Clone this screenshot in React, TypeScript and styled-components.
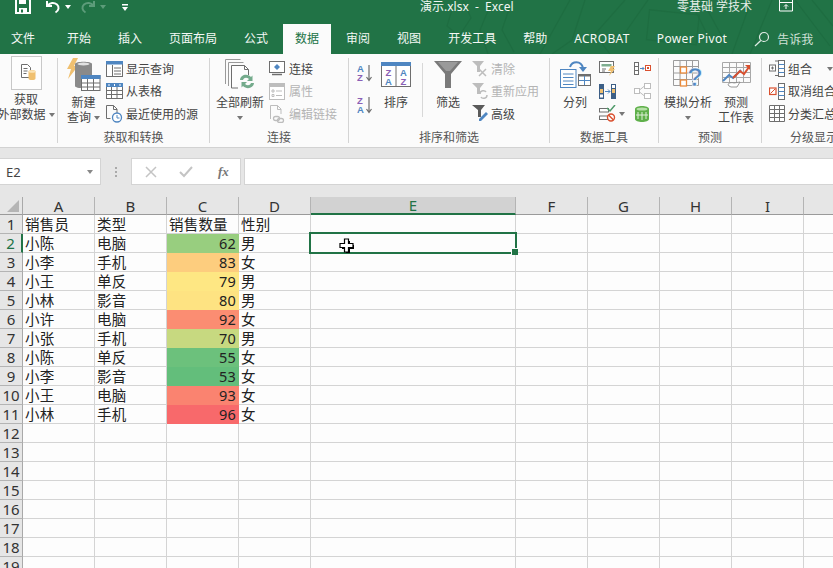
import React from "react";
import styled, { createGlobalStyle } from "styled-components";

const GREEN = "#217346";
const BLUE = "#4f86c1";
const GRAY = "#6e6e6e";
const DIM = "#bdbdbd";
const ORANGE = "#e98a3c";
const AMBER = "#f0c070";
const RED = "#d9502f";
const PURPLE = "#8a5fb5";

const GlobalStyle = createGlobalStyle`
  html, body {
    margin: 0;
    padding: 0;
    background: #fdfdfd;
  }
  * {
    box-sizing: border-box;
  }
`;

/* ---------- drawings ---------- */

const SaveIcon = () => (
  <svg width="16" height="14" viewBox="0 0 16 14">
    <path d="M1 -3h11l3 3v13H1z" fill="none" stroke="#fff" strokeWidth="2" />
    <path d="M4 0h7v4H4zM4 8h8v5H4z" fill="#fff" />
    <rect x="6" y="9.5" width="2" height="3" fill={GREEN} />
  </svg>
);

const UndoIcon = ({ color }: { color: string }) => (
  <svg width="16" height="14" viewBox="0 0 16 14">
    <path d="M2 1v5h5" fill="none" stroke={color} strokeWidth="2" />
    <path d="M2.5 5.5C5 2.5 9 2 12 4.5c2.5 2.300 2 6 -1.500 8" fill="none" stroke={color} strokeWidth="2" />
  </svg>
);

const RedoIcon = ({ color }: { color: string }) => (
  <svg width="16" height="14" viewBox="0 0 16 14">
    <path d="M14 1v5H9" fill="none" stroke={color} strokeWidth="2" />
    <path d="M13.500 5.500C11 2.500 7 2 4 4.500c-2.500 2.300 -2 6 1.500 8" fill="none" stroke={color} strokeWidth="2" />
  </svg>
);

const CustomizeIcon = () => (
  <svg width="8" height="7" viewBox="0 0 8 7">
    <rect x="1" y="0" width="6" height="1.500" fill="#fff" />
    <path d="M1 3h6L4 7z" fill="#fff" />
  </svg>
);

const DisplayIcon = () => (
  <svg width="14" height="12" viewBox="0 0 14 12">
    <path d="M.5 -1h13v12H.5z" fill="none" stroke="#fff" />
    <path d="M.5 2.500h13" stroke="#fff" />
    <path d="M7 9V5M5 6.500 7 4.500 9 6.500" fill="none" stroke="#fff" />
  </svg>
);

const SearchIcon = () => (
  <svg width="16" height="16" viewBox="0 0 16 16">
    <circle cx="10" cy="6" r="4.500" fill="none" stroke="#e2ece6" strokeWidth="1.200" />
    <path d="M6.800 9.500 1 15" stroke="#e2ece6" strokeWidth="1.200" />
  </svg>
);

const Doodle = () => (
  <svg width="413" height="54" viewBox="0 0 413 54">
    <g fill="none" stroke="#1e6d41" strokeWidth="1.200">
      <path d="M35 0 l-8 26 12 10 12 -18 -8 -18" />
      <path d="M120 54 L150 0 M165 0 L152 40 L132 54" />
      <path d="M205 0 L175 34 L190 54 M228 0 L200 40" />
      <path d="M270 0 L290 40 M282 0 L306 44" />
      <path d="M330 4 L312 54 M352 0 L330 54" />
      <path d="M375 0 L410 46 M392 0 L413 26" />
      <path d="M68 54 L60 30 L70 6" />
      <rect x="228" y="12" width="50" height="30" transform="rotate(6 250 26)" />
      <path d="M92 0 L82 30 L94 52" />
    </g>
  </svg>
);

const ExternalDataIcon = () => (
  <svg width="31" height="34" viewBox="0 0 31 34">
    <rect x=".5" y=".5" width="30" height="33" fill="#fdfdfd" stroke="#c8c8c8" />
    <path d="M10.500 8.500h6l3 3v10h-9z" fill="#fff" stroke={GRAY} />
    <path d="M12.500 12.500h4M12.500 15h4M12.500 17.500h3" stroke={GRAY} />
    <path d="M17.500 15.500c0 -2 7 -2 7 0v7c0 2 -7 2 -7 0z" fill={AMBER} />
    <ellipse cx="21" cy="15.500" rx="3.500" ry="1.300" fill="#fbe3b5" />
  </svg>
);

const NewQueryIcon = () => (
  <svg width="34" height="33" viewBox="0 0 34 33">
    <path d="M6 0h5L7 8h4L1 21l3 -10H0z" fill={AMBER} />
    <path d="M8 6c0 -3 17 -3 17 0v22c0 3 -17 3 -17 0z" fill="#8a8a8a" />
    <ellipse cx="16.500" cy="6" rx="6" ry="1.500" fill="#e2e2e2" />
    <rect x="14.500" y="17.500" width="18.500" height="15" fill="#fff" stroke={GRAY} />
    <rect x="14" y="17" width="19.500" height="4" fill={BLUE} />
    <path d="M20.500 21v11M26.500 21v11M15 25h18M15 29h18" stroke={GRAY} />
  </svg>
);

const ShowQueryIcon = () => (
  <svg width="17" height="16" viewBox="0 0 17 16">
    <rect x=".5" y=".5" width="16" height="15" fill="#fff" stroke={GRAY} />
    <rect x="0" y="0" width="17" height="3.500" fill={BLUE} />
    <path d="M6.500 4v11M8 7h7M8 10h7M8 13h7" stroke={GRAY} />
  </svg>
);

const FromTableIcon = () => (
  <svg width="17" height="16" viewBox="0 0 17 16">
    <rect x=".5" y=".5" width="16" height="15" fill="#fff" stroke={GRAY} />
    <rect x="0" y="0" width="17" height="4" fill={BLUE} />
    <path d="M3 1v2M8.500 1v2M14 1v2" stroke="#fff" />
    <path d="M5.500 4v11M11 4v11M1 7.500h15M1 11.500h15" stroke={GRAY} />
  </svg>
);

const RecentIcon = () => (
  <svg width="17" height="18" viewBox="0 0 17 18">
    <path d="M.5 .5h7l3.500 3.500v5M.5 .5v13h4" fill="none" stroke={GRAY} />
    <path d="M7.500 .5v4H11" fill="none" stroke={GRAY} />
    <circle cx="11" cy="12.500" r="4.500" fill="#fff" stroke={BLUE} strokeWidth="1.300" />
    <path d="M11 10v3h2.500" fill="none" stroke={BLUE} />
  </svg>
);

const RefreshAllIcon = () => (
  <svg width="30" height="32" viewBox="0 0 30 32">
    <path d="M.5 25V.5h15" fill="none" stroke="#9a9a9a" />
    <path d="M3.500 27V3.500h15" fill="none" stroke="#9a9a9a" />
    <path d="M6.500 29V6.500h13l4 4V16M6.500 29H13" fill="#fdfdfd" stroke={GRAY} />
    <path d="M19.500 6.500v4h4" fill="none" stroke={GRAY} />
    <path d="M15 21c.5 -5 7 -7 11 -3l1.500 -1.500V22h-5.500l2 -2c-2.500 -2 -5 -1.500 -6 1z" fill="#74ab8c" />
    <path d="M29 24c-.5 5 -7 7 -11 3l-1.500 1.500V23H22l-2 2c2.500 2 5 1.500 6 -1z" fill="#74ab8c" />
  </svg>
);

const ConnectionsIcon = () => (
  <svg width="16" height="15" viewBox="0 0 16 15">
    <rect x=".5" y=".5" width="15" height="11" fill="#fff" stroke={GRAY} />
    <path d="M8 3l3 3 -3 3 -3 -3z" fill={BLUE} />
    <path d="M3 13.500h10" stroke={GRAY} strokeWidth="1.500" />
  </svg>
);

const PropertiesIcon = () => (
  <svg width="16" height="17" viewBox="0 0 16 17">
    <rect x=".5" y=".5" width="15" height="16" fill="#fff" stroke={DIM} />
    <rect x="1" y="1" width="14" height="3" fill={DIM} />
    <path d="M3 7h2v2H3zM3 11.500h2v2H3zM7 8h6M7 12.500h6" fill="none" stroke={DIM} />
  </svg>
);

const EditLinksIcon = () => (
  <svg width="17" height="18" viewBox="0 0 17 18">
    <path d="M1.500 14V.5h7l3.500 3.500v5" fill="none" stroke={DIM} />
    <path d="M8.500 .5v4H12" fill="none" stroke={DIM} />
    <rect x="4.500" y="11.500" width="6" height="4" rx="2" fill="none" stroke={DIM} strokeWidth="1.300" />
    <rect x="8.500" y="13.500" width="6" height="4" rx="2" fill="none" stroke={DIM} strokeWidth="1.300" />
  </svg>
);

const letterStyle = { fontFamily: "'Liberation Sans', sans-serif", fontWeight: 700 } as const;

const SortIcon = ({ top, bottom, topColor, bottomColor }: { top: string; bottom: string; topColor: string; bottomColor: string }) => (
  <svg width="17" height="18" viewBox="0 0 17 18">
    <text x="0" y="8" fontSize="9.500" fill={topColor} style={letterStyle}>{top}</text>
    <text x="0" y="17" fontSize="9.500" fill={bottomColor} style={letterStyle}>{bottom}</text>
    <path d="M12 1v15M9.500 13l2.500 3.500 2.500 -3.500" fill="none" stroke={GRAY} strokeWidth="1.200" />
  </svg>
);

const SortBigIcon = () => (
  <svg width="30" height="25" viewBox="0 0 30 25">
    <rect x=".5" y=".5" width="29" height="24" fill="#fff" stroke={GRAY} />
    <rect x="0" y="0" width="30" height="4" fill={BLUE} />
    <path d="M15 4v20" stroke={GRAY} />
    <text x="7.500" y="13.500" fontSize="9.500" textAnchor="middle" fill={PURPLE} style={letterStyle}>Z</text>
    <text x="7.500" y="23" fontSize="9.500" textAnchor="middle" fill={BLUE} style={letterStyle}>A</text>
    <text x="22.500" y="13.500" fontSize="9.500" textAnchor="middle" fill={BLUE} style={letterStyle}>A</text>
    <text x="22.500" y="23" fontSize="9.500" textAnchor="middle" fill={PURPLE} style={letterStyle}>Z</text>
  </svg>
);

const FunnelBigIcon = () => (
  <svg width="28" height="28" viewBox="0 0 28 28">
    <path d="M0 0h28L17 13v14h-6V13z" fill="#7a7a7a" />
    <path d="M4 1h20l-8 9h-4z" fill="#9a9a9a" />
  </svg>
);

const ClearIcon = () => (
  <svg width="16" height="16" viewBox="0 0 16 16">
    <path d="M0 0h12L8 5v6H5V5z" fill={DIM} />
    <path d="M7 8l7 7M14 8l-7 7" stroke={DIM} strokeWidth="1.500" />
  </svg>
);

const ReapplyIcon = () => (
  <svg width="16" height="17" viewBox="0 0 16 17">
    <path d="M0 0h12L8 5v6H5V5z" fill={DIM} />
    <path d="M8 11c0 -4 5 -4 6 -2M15 12c0 4 -5 4 -6 2" fill="none" stroke={DIM} strokeWidth="1.500" />
  </svg>
);

const AdvancedIcon = () => (
  <svg width="16" height="17" viewBox="0 0 16 17">
    <path d="M0 0h13L9 5v7H6V5z" fill="#5a5a5a" />
    <path d="M14 7l2 2 -7 7H7v-2z" fill={BLUE} />
  </svg>
);

const TextToColumnsIcon = () => (
  <svg width="31" height="27" viewBox="0 0 31 27">
    <rect x=".5" y="8.500" width="15.500" height="18" fill="#fff" stroke={BLUE} />
    <path d="M3 13h10.500M3 16.500h10.500M3 20h10.500M3 23.500h10.500" stroke={BLUE} />
    <path d="M10 6c2 -6 11 -7 13 1" fill="none" stroke={BLUE} strokeWidth="2" />
    <path d="M19 6l4 5 4 -5z" fill={BLUE} />
    <rect x="18.500" y="13.500" width="12" height="11" fill="#fff" stroke={GRAY} />
    <rect x="18" y="13" width="13" height="2.500" fill={GRAY} />
    <path d="M24.500 15v9M19 19.500h11" stroke={BLUE} />
  </svg>
);

const FlashFillIcon = () => (
  <svg width="17" height="16" viewBox="0 0 17 16">
    <rect x=".5" y=".5" width="14" height="11" fill="#fff" stroke={GRAY} />
    <rect x="2.500" y="3" width="10" height="2.500" fill="#7fae90" />
    <path d="M3 8h4M3 10h3" stroke={GRAY} />
    <path d="M12 5h4l-2 3h2l-6 7 2 -5H9z" fill={AMBER} />
  </svg>
);

const RemoveDuplicatesIcon = () => (
  <svg width="17" height="15" viewBox="0 0 17 15">
    <rect x="0" y="0" width="5" height="15" fill="#3d5f86" />
    <rect x="12" y="0" width="5" height="15" fill="#3d5f86" />
    <rect x="1" y="5" width="3" height="4" fill={AMBER} />
    <rect x="13" y="5" width="3" height="4" fill={AMBER} />
    <rect x="1" y="10.500" width="3" height="3" fill="#fff" />
    <rect x="13" y="1" width="3" height="3" fill="#fff" />
    <path d="M6 7.500h5M9 5.500l2 2 -2 2" fill="none" stroke={BLUE} />
  </svg>
);

const ValidationIcon = () => (
  <svg width="17" height="17" viewBox="0 0 17 17">
    <rect x=".5" y="3.500" width="9" height="3.500" fill="#fff" stroke={GRAY} />
    <rect x=".5" y="11" width="9" height="3.500" fill="#fff" stroke={GRAY} />
    <path d="M8 3l3 3 5 -6" fill="none" stroke="#4f9a6a" strokeWidth="1.500" />
    <circle cx="12" cy="12.500" r="3.500" fill="#fff" stroke={RED} strokeWidth="1.400" />
    <path d="M9.500 10l5 5" stroke={RED} strokeWidth="1.400" />
  </svg>
);

const ConsolidateIcon = () => (
  <svg width="17" height="13" viewBox="0 0 17 13">
    <rect x=".5" y=".5" width="4" height="12" fill="#fff" stroke={GRAY} />
    <path d="M1 4.500h3M1 8.500h3" stroke={GRAY} />
    <path d="M6 6.500h4M8.500 5l1.500 1.500L8.500 8" fill="none" stroke={BLUE} />
    <rect x="11.500" y="3.500" width="5" height="5" fill="#fff" stroke={RED} />
    <rect x="13" y="5" width="2" height="2" fill={RED} />
  </svg>
);

const RelationsIcon = () => (
  <svg width="17" height="16" viewBox="0 0 17 16">
    <rect x=".5" y="5.500" width="5" height="5" fill="#fff" stroke={DIM} />
    <rect x="10.500" y=".5" width="6" height="5" fill="#fff" stroke={DIM} />
    <rect x="10.500" y="10.500" width="6" height="5" fill="#fff" stroke={DIM} />
    <path d="M5.500 7l5 -4M5.500 9l5 4" stroke={DIM} />
  </svg>
);

const DataModelIcon = () => (
  <svg width="16" height="16" viewBox="0 0 16 16">
    <path d="M1 3c0 -4 14 -4 14 0v10c0 4 -14 4 -14 0z" fill="#5fb04a" />
    <ellipse cx="8" cy="3" rx="5.500" ry="1.600" fill="#b6e0a8" />
    <path d="M4 6v7M8 6v8M12 6v7M2 9h12" stroke="#dff0d8" />
  </svg>
);

const WhatIfIcon = () => (
  <svg width="30" height="30" viewBox="0 0 30 30">
    <path d="M.5 .5h25v25H.5zM.5 6.500h25M.5 13h25M.5 19.500h25M7 .5v25M13.500 .5v25M19.500 .5v25" fill="none" stroke="#9c9c9c" />
    <rect x="7.500" y="7" width="6" height="6" fill="#fff" stroke={ORANGE} strokeWidth="1.300" />
    <rect x="7.500" y="20" width="6" height="6" fill="#fff" stroke={ORANGE} strokeWidth="1.300" />
    <text x="22" y="26" fontSize="26" textAnchor="middle" fill={BLUE} stroke="#fdfdfd" strokeWidth=".6" style={letterStyle}>?</text>
  </svg>
);

const ForecastIcon = () => (
  <svg width="29" height="26" viewBox="0 0 29 26">
    <path d="M.5 .5h28v20H.5zM.5 5.500h28M.5 10.500h28M.5 15.500h28M7.500 .5v20M14.500 .5v20M21.500 .5v20" fill="none" stroke="#a8a8a8" />
    <path d="M1 19l6 -6 4 3 8 -8" fill="none" stroke={BLUE} strokeWidth="2" />
    <path d="M11 16l7 -7 4 3 5 -7" fill="none" stroke={RED} strokeWidth="2" />
    <path d="M23 3h5v5z" fill={RED} />
    <path d="M7 24c-3 -3 3 -4 5 -3l6 -1 -3 5H9z" fill="#fff" stroke={GRAY} strokeWidth=".7" />
  </svg>
);

const GroupIcon = ({ box }: { box: string }) => (
  <svg width="16" height="17" viewBox="0 0 16 17">
    <rect x=".5" y="5" width="6" height="6" fill="#fff" stroke={box} />
    <path d="M2 8h3M3.500 6.500v3" stroke={box} />
    <path d="M6 1h3.500M6 15.500h3.500" stroke={GRAY} />
    <rect x="9.500" y=".5" width="6" height="16" fill="#fff" stroke={GRAY} />
    <path d="M9.500 4.500h6M9.500 8.500h6M9.500 12.500h6" stroke={BLUE} />
  </svg>
);

const UngroupIcon = () => (
  <svg width="16" height="17" viewBox="0 0 16 17">
    <rect x=".5" y="5" width="6.500" height="6.500" fill="#fff" stroke={RED} strokeWidth="1.200" />
    <path d="M1.500 10.500l4.500 -4.500" stroke={RED} />
    <rect x="9.500" y=".5" width="6" height="16" fill="#fff" stroke={GRAY} />
    <path d="M9.500 4.500h6M9.500 8.500h6M9.500 12.500h6" stroke={BLUE} />
  </svg>
);

const SubtotalIcon = () => (
  <svg width="16" height="17" viewBox="0 0 16 17">
    <path d="M.5 .5h15v16H.5zM.5 4.500h15M.5 8.500h15M.5 12.500h15M5.500 .5v16M10.500 .5v16" fill="#fff" stroke={GRAY} />
  </svg>
);

const CloseMark = () => (
  <svg width="12" height="12" viewBox="0 0 12 12">
    <path d="M1 1l10 10M11 1 1 11" stroke="#c4c4c4" strokeWidth="1.500" />
  </svg>
);

const CheckMark = () => (
  <svg width="14" height="12" viewBox="0 0 14 12">
    <path d="M1 6l4 4 8 -9" fill="none" stroke="#c4c4c4" strokeWidth="2" />
  </svg>
);

const CellCursor = () => (
  <svg width="16" height="16" viewBox="0 0 16 16">
    <path d="M6 2h4v4h4v4h-4v4H6v-4H2V6h4z" fill="#000" transform="translate(1 1)" />
    <path d="M5.500 1h4v4.500H14v4H9.500V14h-4V9.500H1v-4h4.500z" fill="#fff" stroke="#000" strokeWidth="1.200" />
  </svg>
);

/* ---------- page frame ---------- */

const Page = styled.div`
  position: relative;
  width: 833px;
  height: 568px;
  overflow: hidden;
  background: #fdfdfd;
  font-family: "Noto Sans", "Noto Sans CJK SC", sans-serif;
`;

const Header = styled.header`
  position: relative;
  background: ${GREEN};
`;

const HeaderArt = styled.div`
  position: absolute;
  top: 0;
  right: 0;
  line-height: 0;
`;

const TitleBar = styled.div`
  position: relative;
  display: flex;
  align-items: flex-start;
  height: 24px;
  padding-left: 15px;
  overflow: hidden;
`;

const QuickButton = styled.span<{ $width: number; $top?: number }>`
  display: flex;
  align-items: flex-start;
  gap: 4px;
  width: ${(p) => p.$width}px;
  margin-top: ${(p) => p.$top ?? 0}px;
  line-height: 0;
`;

const MiniCaret = styled.span<{ $color?: string; $top?: number }>`
  display: inline-block;
  flex: none;
  width: 0;
  height: 0;
  margin-top: ${(p) => p.$top ?? 0}px;
  border-left: 3.5px solid transparent;
  border-right: 3.5px solid transparent;
  border-top: 4px solid ${(p) => p.$color ?? "#777"};
`;

const FileTitle = styled.span`
  margin-left: 291px;
  width: 257px;
  font-size: 12px;
  line-height: 13px;
  color: #f2f7f4;
  white-space: pre;
`;

const UserName = styled.span`
  width: 102px;
  font-size: 12px;
  line-height: 13px;
  color: #e6efe9;
`;

const TabRow = styled.nav`
  position: relative;
  display: flex;
  gap: 3px;
  height: 30px;
`;

const Tab = styled.div<{ $active?: boolean; $first?: boolean }>`
  padding: 0 ${(p) => (p.$first ? "11px" : "12px")};
  margin-right: ${(p) => (p.$first ? "6px" : "0")};
  font-size: 12px;
  line-height: 30px;
  white-space: nowrap;
  color: ${(p) => (p.$active ? GREEN : "#f4f8f5")};
  background: ${(p) => (p.$active ? "#fbfbfb" : "transparent")};
`;

const LatinTab = styled(Tab)`
  letter-spacing: 0.35px;
`;

const TellMe = styled.div`
  display: flex;
  align-items: center;
  gap: 7px;
  height: 30px;
  margin-left: 12px;
  font-size: 12px;
  color: #cfe0d6;
`;

/* ---------- ribbon ---------- */

const Ribbon = styled.section`
  display: flex;
  height: 94px;
  background: #fbfbfb;
  border-bottom: 1px solid #d2d2d2;
  color: #444;
  font-size: 12px;
  overflow: hidden;
`;

const Group = styled.div<{ $width: number }>`
  flex: none;
  display: flex;
  flex-direction: column;
  width: ${(p) => p.$width}px;
`;

const GroupBody = styled.div<{ $pad?: number }>`
  display: flex;
  align-items: flex-start;
  height: 75px;
  padding-left: ${(p) => p.$pad ?? 0}px;
`;

const GroupLabel = styled.div`
  text-align: center;
  font-size: 12px;
  line-height: 19px;
  white-space: nowrap;
  color: #555;
`;

const GroupDivider = styled.div`
  flex: none;
  width: 1px;
  margin: 4px 0 4px;
  background: #d4d4d4;
`;

const LargeButton = styled.div<{ $width: number; $gap?: number }>`
  flex: none;
  display: flex;
  flex-direction: column;
  align-items: center;
  width: ${(p) => p.$width}px;
  margin-left: ${(p) => p.$gap ?? 0}px;
`;

const ClippedButton = styled(LargeButton)`
  margin-left: -4px;
`;

const IconSlot = styled.div<{ $height?: number }>`
  display: flex;
  align-items: center;
  justify-content: center;
  height: ${(p) => p.$height ?? 41}px;
  line-height: 0;
`;

const ButtonLine = styled.div`
  display: flex;
  align-items: center;
  justify-content: center;
  gap: 3px;
  height: 15px;
  line-height: 15px;
  white-space: nowrap;
  color: #444;
`;

const SmallStack = styled.div<{ $gap?: number; $width?: number }>`
  flex: none;
  display: flex;
  flex-direction: column;
  width: ${(p) => (p.$width ? `${p.$width}px` : "auto")};
  margin-left: ${(p) => p.$gap ?? 0}px;
  padding-top: 3.5px;
`;

const SmallRow = styled.div<{ $dim?: boolean; $gap?: number }>`
  display: flex;
  align-items: center;
  gap: ${(p) => p.$gap ?? 3}px;
  height: 22.5px;
  white-space: nowrap;
  color: ${(p) => (p.$dim ? "#b4b4b4" : "#444")};
  svg {
    flex: none;
  }
`;

const SortStack = styled.div`
  flex: none;
  display: flex;
  flex-direction: column;
  gap: 14px;
  margin-left: 8px;
  padding-top: 10px;
  line-height: 0;
`;

const ThinDivider = styled.div`
  flex: none;
  width: 1px;
  height: 54px;
  margin: 9px 0 0 11px;
  background: #d8d8d8;
`;

/* ---------- formula bar ---------- */

const FormulaBar = styled.div`
  display: flex;
  align-items: center;
  height: 49px;
  padding-bottom: 2px;
  background: #e6e6e6;
`;

const NameBox = styled.div`
  display: flex;
  align-items: center;
  justify-content: space-between;
  width: 101px;
  height: 27px;
  padding: 0 7px 0 6px;
  background: #fff;
  border: 1px solid #d4d4d4;
  border-left: 0;
  font-size: 13px;
  color: #444;
`;

const GripDots = styled.div`
  width: 2px;
  height: 10px;
  margin: 0 14px 0 14px;
  background: repeating-linear-gradient(#aaa 0 2px, transparent 2px 4px);
`;

const FormulaButtons = styled.div`
  display: flex;
  align-items: center;
  width: 110px;
  height: 27px;
  padding-left: 13px;
  gap: 22px;
  background: #fff;
  border: 1px solid #d4d4d4;
`;

const FxLabel = styled.span`
  font-family: "Liberation Serif", serif;
  font-style: italic;
  font-weight: 700;
  font-size: 13px;
  color: #777;
  margin-left: 3px;
`;

const FormulaInput = styled.div`
  flex: 1;
  height: 27px;
  margin-left: 3px;
  background: #fff;
  border: 1px solid #d4d4d4;
  border-right: 0;
`;

/* ---------- sheet ---------- */

const Sheet = styled.div`
  display: grid;
  grid-template-columns: 23px repeat(4, 72px) 205px repeat(5, 72px);
  grid-template-rows: 18px;
  grid-auto-rows: 19px;
  width: 876px;
  font-size: 14.5px;
  color: #222;
`;

const CornerCell = styled.div`
  position: relative;
  background: #e6e6e6;
  border-right: 1px solid #a9a9a9;
  border-bottom: 1px solid #9a9a9a;
  &::after {
    content: "";
    position: absolute;
    right: 3px;
    bottom: 2px;
    border-left: 12px solid transparent;
    border-bottom: 12px solid #b5b5b5;
  }
`;

const ColHead = styled.div<{ $active?: boolean }>`
  display: flex;
  align-items: center;
  justify-content: center;
  font-size: 15px;
  line-height: 16px;
  background: ${(p) => (p.$active ? "#d2d2d2" : "#e6e6e6")};
  color: ${(p) => (p.$active ? GREEN : "#333")};
  border-right: 1px solid #b4b4b4;
  border-bottom: ${(p) => (p.$active ? `2px solid ${GREEN}` : "1px solid #9a9a9a")};
`;

const RowHead = styled.div<{ $active?: boolean }>`
  display: flex;
  align-items: center;
  justify-content: center;
  font-size: 15px;
  line-height: 16px;
  padding-bottom: 1px;
  background: #e6e6e6;
  color: ${(p) => (p.$active ? GREEN : "#333")};
  border-right: ${(p) => (p.$active ? `2px solid ${GREEN}` : "1px solid #a9a9a9")};
  border-bottom: 1px solid #b4b4b4;
`;

const Cell = styled.div<{ $fill?: string; $right?: boolean }>`
  position: relative;
  display: flex;
  align-items: center;
  justify-content: ${(p) => (p.$right ? "flex-end" : "flex-start")};
  padding: 0 2px;
  line-height: 16px;
  white-space: nowrap;
  letter-spacing: 0.2px;
  background: ${(p) => p.$fill ?? "#fdfdfd"};
  border-right: 1px solid ${(p) => p.$fill ?? "#d4d4d4"};
  border-bottom: 1px solid ${(p) => p.$fill ?? "#d4d4d4"};
`;

const Selection = styled.div`
  position: absolute;
  z-index: 2;
  top: -2px;
  left: -2px;
  right: -2px;
  bottom: -2px;
  border: 2px solid ${GREEN};
`;

const FillHandle = styled.div`
  position: absolute;
  right: -3px;
  bottom: -3px;
  width: 6px;
  height: 6px;
  background: ${GREEN};
  border-left: 1px solid #fdfdfd;
  border-top: 1px solid #fdfdfd;
  box-sizing: content-box;
`;

const Pointer = styled.div`
  position: absolute;
  top: 4px;
  left: 28px;
  line-height: 0;
`;

const COLUMNS = ["A", "B", "C", "D", "E", "F", "G", "H", "I", "J"];

const RECORDS: [string, string, number, string, string][] = [
  ["小陈", "电脑", 62, "男", "#98ce7f"],
  ["小李", "手机", 83, "女", "#fdcd7e"],
  ["小王", "单反", 79, "男", "#fee783"],
  ["小林", "影音", 80, "男", "#fee382"],
  ["小许", "电脑", 92, "女", "#fb8d72"],
  ["小张", "手机", 70, "男", "#c7d980"],
  ["小陈", "单反", 55, "女", "#6cc17c"],
  ["小李", "影音", 53, "女", "#63be7b"],
  ["小王", "电脑", 93, "女", "#fa8370"],
  ["小林", "手机", 96, "女", "#f8696b"],
];

const TABS = ["开始", "插入", "页面布局", "公式", "数据", "审阅", "视图", "开发工具", "帮助"];
const LATIN_TABS = ["ACROBAT", "Power Pivot"];

function EmptyCells({ row }: { row: number }) {
  return (
    <>
      {COLUMNS.slice(4).map((col) => (
        <Cell key={col + row}>
          {col === "E" && row === 2 && (
            <Selection>
              <FillHandle />
              <Pointer>
                <CellCursor />
              </Pointer>
            </Selection>
          )}
        </Cell>
      ))}
    </>
  );
}

function Worksheet() {
  return (
    <Sheet>
      <CornerCell />
      {COLUMNS.map((col) => (
        <ColHead key={col} $active={col === "E"}>
          {col}
        </ColHead>
      ))}

      <RowHead>1</RowHead>
      <Cell>销售员</Cell>
      <Cell>类型</Cell>
      <Cell>销售数量</Cell>
      <Cell>性别</Cell>
      <EmptyCells row={1} />

      {RECORDS.map(([name, kind, count, sex, fill], i) => (
        <React.Fragment key={i}>
          <RowHead $active={i === 0}>{i + 2}</RowHead>
          <Cell>{name}</Cell>
          <Cell>{kind}</Cell>
          <Cell $fill={fill} $right>
            {count}
          </Cell>
          <Cell>{sex}</Cell>
          <EmptyCells row={i + 2} />
        </React.Fragment>
      ))}

      {[12, 13, 14, 15, 16, 17, 18, 19].map((row) => (
        <React.Fragment key={row}>
          <RowHead>{row}</RowHead>
          <Cell />
          <Cell />
          <Cell />
          <Cell />
          <EmptyCells row={row} />
        </React.Fragment>
      ))}
    </Sheet>
  );
}

function RibbonBar() {
  return (
    <Ribbon>
      <Group $width={57}>
        <GroupBody>
          <ClippedButton $width={60}>
            <IconSlot $height={38}>
              <ExternalDataIcon />
            </IconSlot>
            <ButtonLine>获取</ButtonLine>
            <ButtonLine>
              外部数据 <MiniCaret />
            </ButtonLine>
          </ClippedButton>
        </GroupBody>
      </Group>
      <GroupDivider />

      <Group $width={151}>
        <GroupBody $pad={7}>
          <LargeButton $width={37}>
            <IconSlot>
              <NewQueryIcon />
            </IconSlot>
            <ButtonLine>新建</ButtonLine>
            <ButtonLine>
              查询 <MiniCaret />
            </ButtonLine>
          </LargeButton>
          <SmallStack $gap={4}>
            <SmallRow>
              <ShowQueryIcon />
              显示查询
            </SmallRow>
            <SmallRow>
              <FromTableIcon />
              从表格
            </SmallRow>
            <SmallRow>
              <RecentIcon />
              最近使用的源
            </SmallRow>
          </SmallStack>
        </GroupBody>
        <GroupLabel>获取和转换</GroupLabel>
      </Group>
      <GroupDivider />

      <Group $width={138}>
        <GroupBody $pad={6}>
          <LargeButton $width={48}>
            <IconSlot>
              <RefreshAllIcon />
            </IconSlot>
            <ButtonLine>全部刷新</ButtonLine>
            <ButtonLine>
              <MiniCaret />
            </ButtonLine>
          </LargeButton>
          <SmallStack $gap={5}>
            <SmallRow $gap={4}>
              <ConnectionsIcon />
              连接
            </SmallRow>
            <SmallRow $dim $gap={4}>
              <PropertiesIcon />
              属性
            </SmallRow>
            <SmallRow $dim>
              <EditLinksIcon />
              编辑链接
            </SmallRow>
          </SmallStack>
        </GroupBody>
        <GroupLabel>连接</GroupLabel>
      </Group>
      <GroupDivider />

      <Group $width={200}>
        <GroupBody>
          <SortStack>
            <SortIcon top="A" bottom="Z" topColor={BLUE} bottomColor={PURPLE} />
            <SortIcon top="Z" bottom="A" topColor={PURPLE} bottomColor={BLUE} />
          </SortStack>
          <LargeButton $width={30} $gap={7}>
            <IconSlot>
              <SortBigIcon />
            </IconSlot>
            <ButtonLine>排序</ButtonLine>
          </LargeButton>
          <ThinDivider />
          <LargeButton $width={30} $gap={10}>
            <IconSlot>
              <FunnelBigIcon />
            </IconSlot>
            <ButtonLine>筛选</ButtonLine>
          </LargeButton>
          <SmallStack $gap={9}>
            <SmallRow $dim>
              <ClearIcon />
              清除
            </SmallRow>
            <SmallRow $dim>
              <ReapplyIcon />
              重新应用
            </SmallRow>
            <SmallRow>
              <AdvancedIcon />
              高级
            </SmallRow>
          </SmallStack>
        </GroupBody>
        <GroupLabel>排序和筛选</GroupLabel>
      </Group>
      <GroupDivider />

      <Group $width={108}>
        <GroupBody $pad={8}>
          <LargeButton $width={34}>
            <IconSlot>
              <TextToColumnsIcon />
            </IconSlot>
            <ButtonLine>分列</ButtonLine>
          </LargeButton>
          <SmallStack $gap={7} $width={35}>
            <SmallRow>
              <FlashFillIcon />
            </SmallRow>
            <SmallRow>
              <RemoveDuplicatesIcon />
            </SmallRow>
            <SmallRow>
              <ValidationIcon />
              <MiniCaret />
            </SmallRow>
          </SmallStack>
          <SmallStack>
            <SmallRow>
              <ConsolidateIcon />
            </SmallRow>
            <SmallRow>
              <RelationsIcon />
            </SmallRow>
            <SmallRow>
              <DataModelIcon />
            </SmallRow>
          </SmallStack>
        </GroupBody>
        <GroupLabel>数据工具</GroupLabel>
      </Group>
      <GroupDivider />

      <Group $width={102}>
        <GroupBody $pad={5}>
          <LargeButton $width={48}>
            <IconSlot>
              <WhatIfIcon />
            </IconSlot>
            <ButtonLine>模拟分析</ButtonLine>
            <ButtonLine>
              <MiniCaret />
            </ButtonLine>
          </LargeButton>
          <LargeButton $width={36} $gap={6}>
            <IconSlot>
              <ForecastIcon />
            </IconSlot>
            <ButtonLine>预测</ButtonLine>
            <ButtonLine>工作表</ButtonLine>
          </LargeButton>
        </GroupBody>
        <GroupLabel>预测</GroupLabel>
      </Group>
      <GroupDivider />

      <Group $width={104}>
        <GroupBody $pad={7}>
          <SmallStack>
            <SmallRow>
              <GroupIcon box={GRAY} />
              组合&nbsp;&nbsp;&nbsp;&nbsp;
              <MiniCaret />
            </SmallRow>
            <SmallRow>
              <UngroupIcon />
              取消组合
            </SmallRow>
            <SmallRow>
              <SubtotalIcon />
              分类汇总
            </SmallRow>
          </SmallStack>
        </GroupBody>
        <GroupLabel>分级显示</GroupLabel>
      </Group>
    </Ribbon>
  );
}

export default function App() {
  return (
    <Page>
      <GlobalStyle />
      <Header>
        <HeaderArt>
          <Doodle />
        </HeaderArt>
        <TitleBar>
          <QuickButton $width={30}>
            <SaveIcon />
          </QuickButton>
          <QuickButton $width={35}>
            <UndoIcon color="#fff" />
            <MiniCaret $color="#fff" $top={5} />
          </QuickButton>
          <QuickButton $width={41}>
            <RedoIcon color="#5d9c7a" />
            <MiniCaret $color="#5d9c7a" $top={5} />
          </QuickButton>
          <QuickButton $width={8} $top={4}>
            <CustomizeIcon />
          </QuickButton>
          <FileTitle>演示.xlsx  -  Excel</FileTitle>
          <UserName>零基础 学技术</UserName>
          <QuickButton $width={14}>
            <DisplayIcon />
          </QuickButton>
        </TitleBar>
        <TabRow>
          <Tab $first>文件</Tab>
          {TABS.map((tab) => (
            <Tab key={tab} $active={tab === "数据"}>
              {tab}
            </Tab>
          ))}
          {LATIN_TABS.map((tab) => (
            <LatinTab key={tab}>{tab}</LatinTab>
          ))}
          <TellMe>
            <SearchIcon />
            告诉我
          </TellMe>
        </TabRow>
      </Header>
      <RibbonBar />
      <FormulaBar>
        <NameBox>
          E2
          <MiniCaret $color="#888" />
        </NameBox>
        <GripDots />
        <FormulaButtons>
          <CloseMark />
          <CheckMark />
          <FxLabel>fx</FxLabel>
        </FormulaButtons>
        <FormulaInput />
      </FormulaBar>
      <Worksheet />
    </Page>
  );
}
